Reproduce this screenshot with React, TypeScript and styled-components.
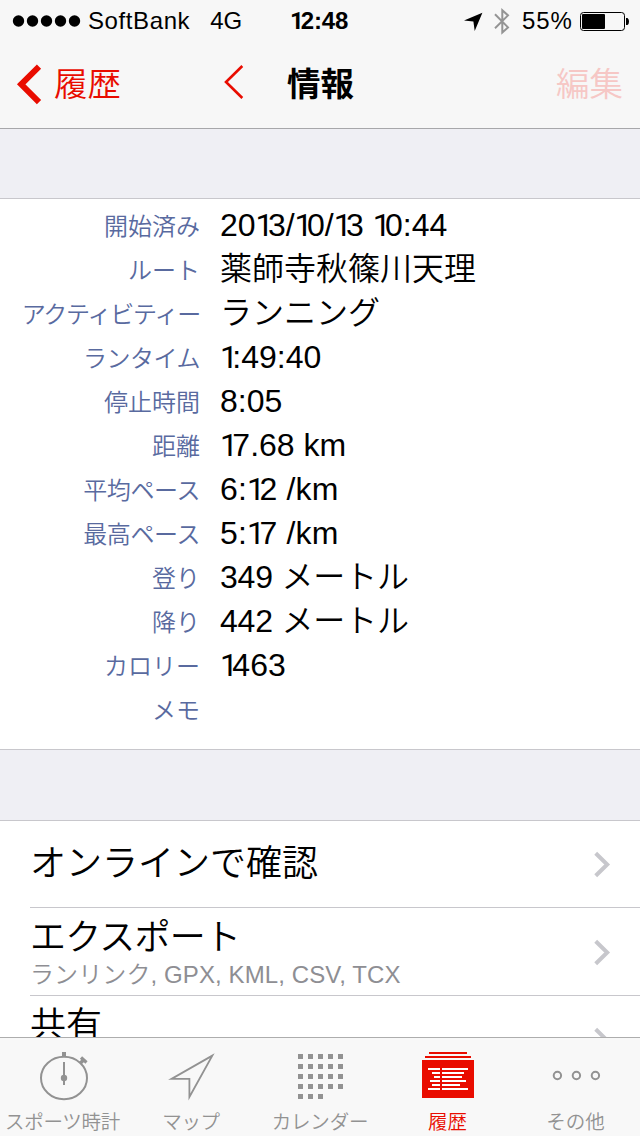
import React from "react";
import styled, { createGlobalStyle } from "styled-components";

const RED = "#e90c00";
const LATIN = `"Liberation Sans", "Noto Sans CJK JP", sans-serif`;
const CJK = `"Noto Sans CJK JP", "Liberation Sans", sans-serif`;

const GlobalStyle = createGlobalStyle`
  * { box-sizing: border-box; }
  body { margin: 0; background: #fff; }
`;

const Screen = styled.div`
  width: 640px;
  height: 1136px;
  display: flex;
  flex-direction: column;
  overflow: hidden;
  background: #efeff4;
  color: #000;
  font-family: ${LATIN};
  font-weight: 350;
`;

const Header = styled.header`
  flex: none;
  height: 129px;
  background: #f7f7f7;
  border-bottom: 1px solid #a7a7aa;
`;

const StatusBar = styled.div`
  height: 41px;
  display: grid;
  grid-template-columns: 290px 1fr 176px;
  align-items: center;
  font-size: 24px;
  line-height: 41px;
`;

const Carrier = styled.div`
  display: flex;
  align-items: center;
  padding-left: 12px;
`;

const Tracked = styled.span<{ $spacing?: number; $gap?: number }>`
  letter-spacing: ${(p) => p.$spacing ?? 0}px;
  margin-left: ${(p) => p.$gap ?? 0}px;
  white-space: nowrap;
`;

const Clock = styled.div`
  font-weight: 700;
  letter-spacing: -0.1px;
`;

const Indicators = styled.div`
  display: flex;
  align-items: center;
  padding-right: 10px;
`;

const NavBar = styled.nav`
  height: 87px;
  display: grid;
  grid-template-columns: 1fr 66px 1fr;
  font-size: 33.5px;
  line-height: 82px;
  font-family: ${CJK};
  white-space: nowrap;
`;

const BackButton = styled.div`
  display: flex;
  align-items: flex-start;
  padding-left: 14px;
  color: ${RED};
`;

const BackLabel = styled.span`
  width: 66px;
  margin-left: 10px;
`;

const NavTitle = styled.div`
  font-weight: 700;
`;

const EditButton = styled.div`
  padding-right: 17px;
  text-align: right;
  color: #f6c7c5;
`;

const Content = styled.main`
  flex: 1;
  min-height: 0;
  overflow: hidden;
  padding-top: 69px;
`;

const Panel = styled.section`
  background: #fff;
  border-top: 1px solid #c8c7cc;
  border-bottom: 1px solid #c8c7cc;
`;

const Details = styled(Panel)`
  height: 552px;
  padding-top: 4px;
`;

const DetailRow = styled.div`
  height: 44px;
  display: grid;
  grid-template-columns: 200px 1fr;
  column-gap: 20px;
  line-height: 44px;
  white-space: nowrap;
`;

const DetailLabel = styled.div<{ $spacing: number }>`
  display: flex;
  justify-content: flex-end;
  font-family: ${CJK};
  font-size: 24px;
  letter-spacing: ${(p) => p.$spacing}px;
  color: #596a9f;
`;

const DetailValue = styled.div<{ $spacing: number }>`
  font-size: 32px;
  letter-spacing: ${(p) => p.$spacing}px;
`;

const NarrowOne = styled.span<{ $bold?: boolean }>`
  font-family: Roboto, ${LATIN};
  font-weight: ${(p) => (p.$bold ? 700 : 400)};
  line-height: 1;
  letter-spacing: ${(p) => (p.$bold ? -0.13 : -0.177)}em;
`;

const Actions = styled(Panel)`
  margin-top: 70px;
  padding-left: 30px;
`;

const ActionRow = styled.div`
  height: 88px;
  display: flex;
  justify-content: space-between;
  padding-right: 28px;
  &:first-child { height: 86px; }
  & + & { border-top: 1px solid #c8c7cc; }
`;

const ActionText = styled.div<{ $centered?: boolean }>`
  display: flex;
  flex-direction: column;
  padding-top: ${(p) => (p.$centered ? 21 : 8)}px;
`;

const ActionTitle = styled.div<{ $spacing?: number }>`
  font-size: 36px;
  line-height: 44px;
  letter-spacing: ${(p) => p.$spacing ?? 0}px;
  white-space: nowrap;
`;

const ActionNote = styled.div`
  font-size: 24px;
  line-height: 30px;
  letter-spacing: 0.1px;
  color: #8e8e93;
  white-space: nowrap;
`;

const Disclosure = styled.svg<{ $top: number }>`
  width: 20px;
  height: 30px;
  margin-top: ${(p) => p.$top}px;
`;

const TabBar = styled.footer`
  flex: none;
  height: 99px;
  display: grid;
  grid-template-columns: repeat(5, 128px);
  background: #f8f8f8;
  border-top: 1px solid #adadad;
`;

const Tab = styled.div<{ $active?: boolean }>`
  display: flex;
  flex-direction: column;
  align-items: center;
  color: ${(p) => (p.$active ? RED : "#929292")};
`;

const TabIcon = styled.svg`
  width: 64px;
  height: 66px;
  flex: none;
`;

const TabLabel = styled.span<{ $spacing?: number; $shift?: number }>`
  font-family: ${CJK};
  font-size: 19.5px;
  line-height: 34px;
  letter-spacing: ${(p) => p.$spacing ?? 0}px;
  margin-left: ${(p) => p.$shift ?? 0}px;
  white-space: nowrap;
`;

type Detail = { label: string; value: string; labelSpacing?: number; spacing?: number };

const details: Detail[] = [
  { label: "開始済み", value: "2013/10/13 10:44" },
  { label: "ルート", value: "薬師寺秋篠川天理" },
  { label: "アクティビティー", value: "ランニング", labelSpacing: -1.2 },
  { label: "ランタイム", value: "1:49:40", labelSpacing: -0.5 },
  { label: "停止時間", value: "8:05" },
  { label: "距離", value: "17.68 km" },
  { label: "平均ペース", value: "6:12 /km", spacing: 0.2, labelSpacing: -0.4 },
  { label: "最高ペース", value: "5:17 /km", spacing: 0.2, labelSpacing: -0.4 },
  { label: "登り", value: "349 メートル", spacing: -0.2 },
  { label: "降り", value: "442 メートル", spacing: -0.2 },
  { label: "カロリー", value: "1463" },
  { label: "メモ", value: "" },
];

const Figures = ({ text, bold }: { text: string; bold?: boolean }) => (
  <>
    {text.split(/(1)/).map((part, i) =>
      part === "1" ? <NarrowOne key={i} $bold={bold}>1</NarrowOne> : part
    )}
  </>
);

const SignalDots = () => (
  <svg width="70" height="14" viewBox="0 0 70 14" fill="#000">
    {[6.5, 20.5, 34.5, 48.5, 62.5].map((x) => (
      <circle key={x} cx={x} cy="7" r="5.7" />
    ))}
  </svg>
);

const StatusIcons = () => (
  <svg width="50" height="40" viewBox="464 0 50 40">
    <path d="M464 19.4 482.4 11.8 474.7 30 473.4 20.6Z" fill="#000" />
    <path d="M495 13.2 508 26.4 502.3 31.5V9.3L508 14.4 495 27.2" fill="none" stroke="#949494" strokeWidth="2" />
  </svg>
);

const BatteryIcon = styled.svg`
  margin-left: auto;
`;

const Battery = () => (
  <BatteryIcon width="50" height="40" viewBox="580 0 50 40">
    <rect x="580.5" y="11.5" width="44" height="18" rx="3" fill="none" stroke="#000" />
    <rect x="582" y="13" width="23" height="15" rx="1" fill="#000" />
    <path d="M626 17h1.5q1.5 1.2 1.5 3.5t-1.5 3.5H626Z" fill="#000" />
  </BatteryIcon>
);

const NavArrow = styled.svg`
  flex: none;
  height: 87px;
`;

const SmallArrow = styled(NavArrow)`
  margin-left: 98px;
`;

const Chevron = ({ top = 30 }: { top?: number }) => (
  <Disclosure $top={top} viewBox="592 850 20 30">
    <path d="M595.7 853.2 607.2 864.5 595.7 875.8" fill="none" stroke="#c7c7cc" strokeWidth="4" />
  </Disclosure>
);

const calendarCells = Array.from({ length: 23 }, (_, i) => ({
  x: 298 + (i % 5) * 10,
  y: 1054 + Math.floor(i / 5) * 10,
}));

const logLines = [
  [428, 468],
  [432, 464],
  [434, 462],
  [430, 466],
  [432, 460],
  [428, 468],
];

export default function App() {
  return (
    <Screen>
      <GlobalStyle />
      <Header>
        <StatusBar>
          <Carrier>
            <SignalDots />
            <Tracked $spacing={0.6} $gap={6}>SoftBank</Tracked>
            <Tracked $gap={20}>4G</Tracked>
          </Carrier>
          <Clock><Figures text="12:48" bold /></Clock>
          <Indicators>
            <StatusIcons />
            <Tracked $spacing={0.9} $gap={8}>55%</Tracked>
            <Battery />
          </Indicators>
        </StatusBar>
        <NavBar>
          <BackButton>
            <NavArrow width="30" viewBox="14 41 30 87">
              <path d="M39 66.7 21.2 84.3 39 102.2" fill="none" stroke={RED} strokeWidth="6" />
            </NavArrow>
            <BackLabel>履歴</BackLabel>
            <SmallArrow width="28" viewBox="218 41 28 87">
              <path d="M242.3 66 226 82 242.3 98" fill="none" stroke={RED} strokeWidth="2.6" />
            </SmallArrow>
          </BackButton>
          <NavTitle>情報</NavTitle>
          <EditButton>編集</EditButton>
        </NavBar>
      </Header>
      <Content>
        <Details>
          {details.map((d) => (
            <DetailRow key={d.label}>
              <DetailLabel $spacing={d.labelSpacing ?? 0}>{d.label}</DetailLabel>
              <DetailValue $spacing={d.spacing ?? 0}>
                <Figures text={d.value} />
              </DetailValue>
            </DetailRow>
          ))}
        </Details>
        <Actions>
          <ActionRow>
            <ActionText $centered>
              <ActionTitle>オンラインで確認</ActionTitle>
            </ActionText>
            <Chevron top={29} />
          </ActionRow>
          <ActionRow>
            <ActionText>
              <ActionTitle $spacing={-0.8}>エクスポート</ActionTitle>
              <ActionNote>ランリンク, GPX, KML, CSV, TCX</ActionNote>
            </ActionText>
            <Chevron />
          </ActionRow>
          <ActionRow>
            <ActionText>
              <ActionTitle>共有</ActionTitle>
            </ActionText>
            <Chevron />
          </ActionRow>
        </Actions>
      </Content>
      <TabBar>
        <Tab>
          <TabIcon viewBox="32 1038 64 66" fill="none" stroke="currentColor" strokeWidth="2">
            <ellipse cx="64" cy="1078" rx="23" ry="21.2" />
            <path d="M64 1052V1057" strokeWidth="4" />
            <path d="M64 1062V1085" />
            <circle cx="64" cy="1078" r="3.2" fill="currentColor" stroke="none" />
            <path d="M80.5 1063 84 1059.5" strokeWidth="3.5" />
            <path d="M81 1057.5 86.5 1062.5" strokeWidth="3.2" />
          </TabIcon>
          <TabLabel $spacing={-0.3} $shift={-3}>スポーツ時計</TabLabel>
        </Tab>
        <Tab>
          <TabIcon viewBox="160 1038 64 66" fill="none" stroke="currentColor" strokeWidth="1.8">
            <path d="M212.3 1055.6 171.5 1078.9H189.4V1097Z" strokeMiterlimit="10" />
          </TabIcon>
          <TabLabel $spacing={-0.3} $shift={-2}>マップ</TabLabel>
        </Tab>
        <Tab>
          <TabIcon viewBox="288 1038 64 66" fill="currentColor">
            {calendarCells.map((c) => (
              <rect key={`${c.x}-${c.y}`} x={c.x} y={c.y} width="5" height="5" />
            ))}
          </TabIcon>
          <TabLabel $spacing={-0.2}>カレンダー</TabLabel>
        </Tab>
        <Tab $active>
          <TabIcon viewBox="416 1038 64 66" fill="currentColor">
            <rect x="429" y="1052" width="38" height="2" />
            <rect x="425" y="1056" width="46" height="2" />
            <rect x="422" y="1060" width="52" height="38" />
            {logLines.map(([from, to], i) => (
              <React.Fragment key={i}>
                <rect x={from} y={1068 + i * 4} width={440 - from} height="2" fill="#fff" />
                <rect x={442} y={1068 + i * 4} width={to - 442} height="2" fill="#fff" />
              </React.Fragment>
            ))}
          </TabIcon>
          <TabLabel $shift={-1}>履歴</TabLabel>
        </Tab>
        <Tab>
          <TabIcon viewBox="544 1038 64 66" fill="none" stroke="currentColor" strokeWidth="2">
            <circle cx="557.4" cy="1075.5" r="3.7" />
            <circle cx="576.4" cy="1075.5" r="3.7" />
            <circle cx="595.4" cy="1075.5" r="3.7" />
          </TabIcon>
          <TabLabel $shift={-1}>その他</TabLabel>
        </Tab>
      </TabBar>
    </Screen>
  );
}
